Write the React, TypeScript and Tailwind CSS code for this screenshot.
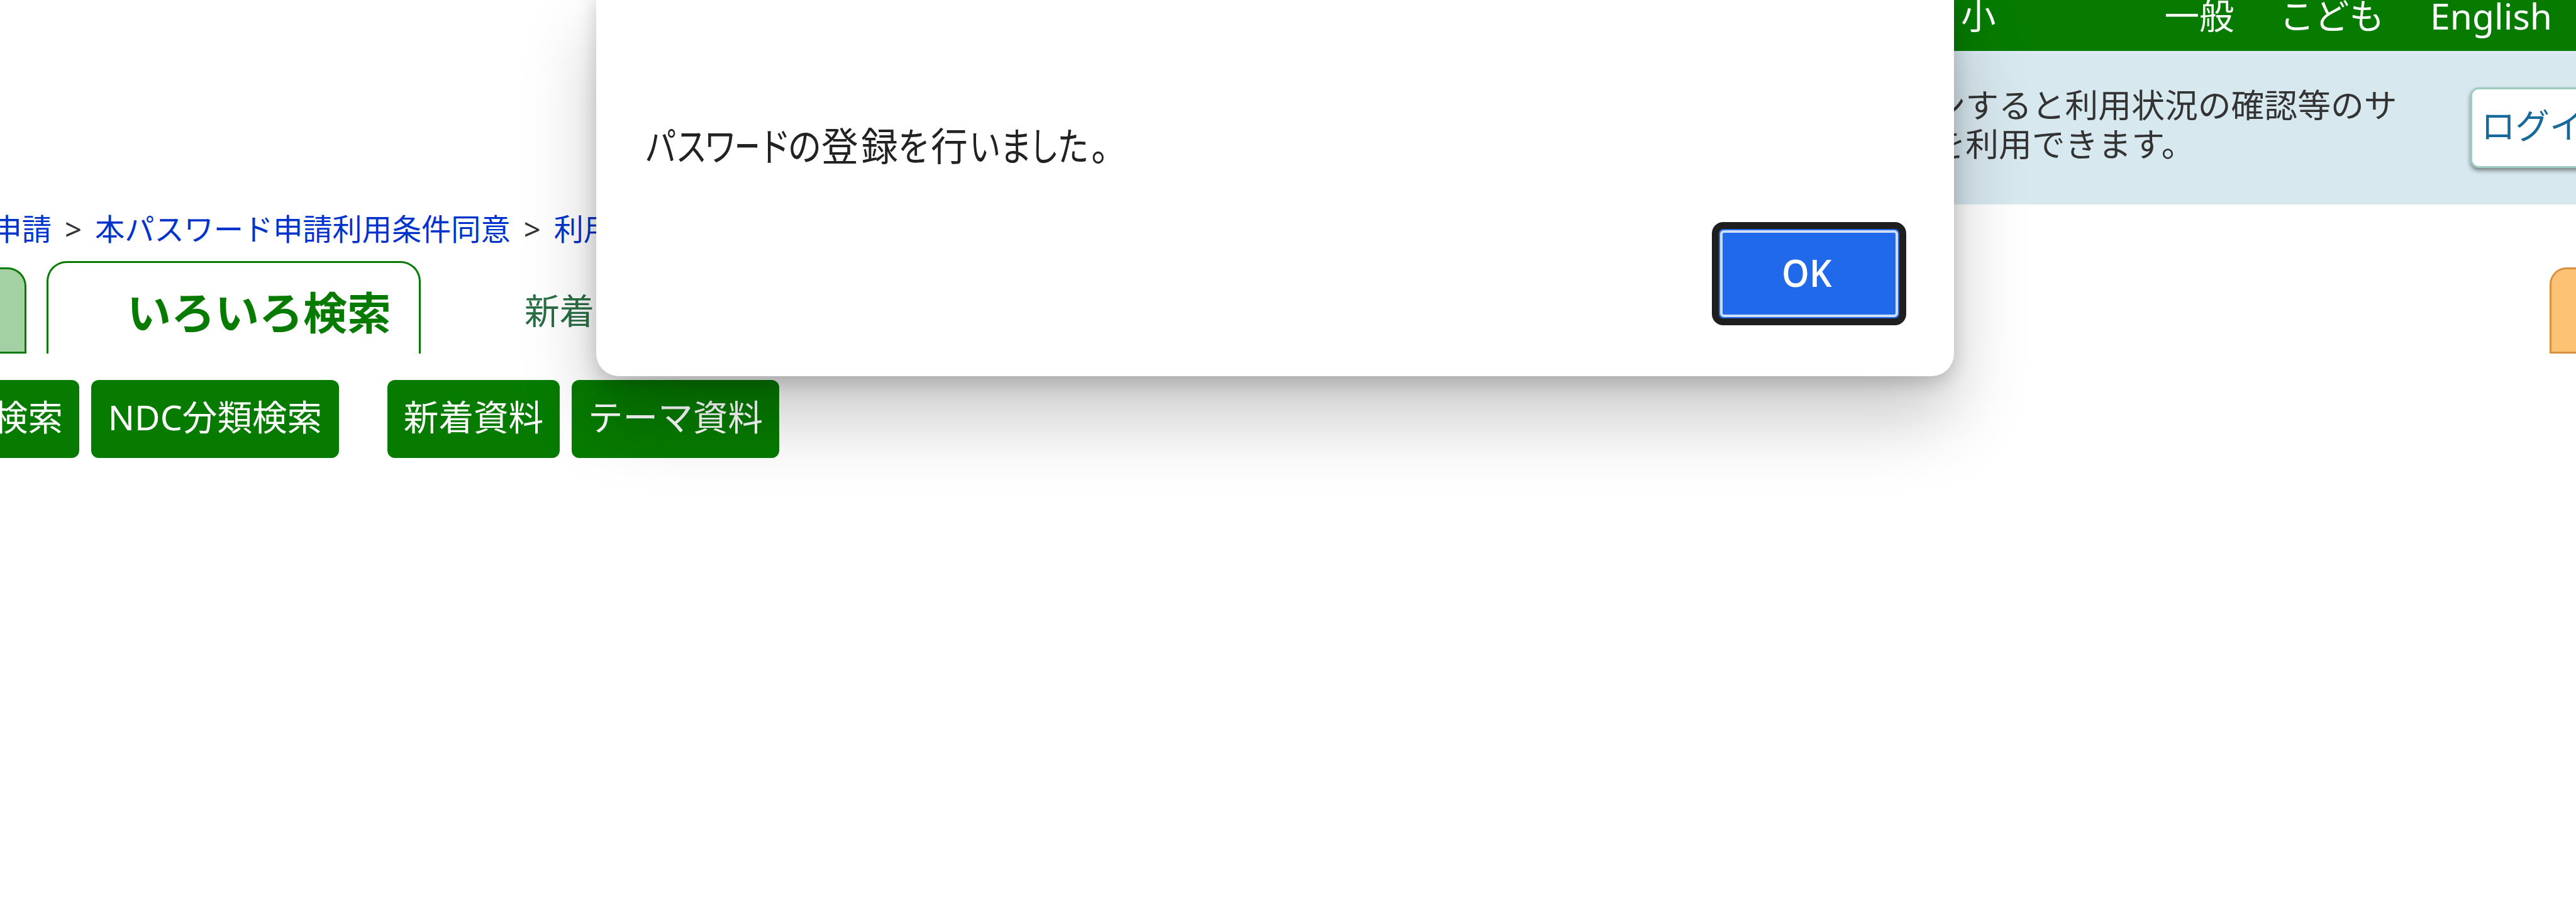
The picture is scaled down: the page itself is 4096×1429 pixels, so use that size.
import type { ReactNode } from 'react'

// [character, cell width, horizontal scale] - the dialog font has narrow kana
const message: [string, number, number][] = [
  ['パ', 51, 0.8],
  ['ス', 46, 0.8],
  ['ワ', 47, 0.84],
  ['ー', 39, 0.64],
  ['ド', 47, 0.84],
  ['の', 49, 0.86],
  ['登', 62, 0.94],
  ['録', 64, 0.94],
  ['を', 47, 0.82],
  ['行', 64, 0.94],
  ['い', 50, 0.8],
  ['ま', 48, 0.82],
  ['し', 43, 0.76],
  ['た', 49, 0.8],
  ['。', 65, 0.9],
]

const SearchButton = ({ className, children }: { className: string; children: ReactNode }) => (
  <button
    type="button"
    className={`flex h-[124px] items-center whitespace-nowrap bg-[#067b00] pb-[7px] text-[55.6px] leading-none text-white ${className}`}
  >
    {children}
  </button>
)

const Header = () => (
  <header className="ml-[2700px] h-[325px]">
    <div className="flex h-[81px] items-start bg-[#067b00] pl-[418px] text-[55.5px] leading-[50px] whitespace-nowrap text-white">
      <span>小</span>
      <a className="ml-[268px]">一般</a>
      <a className="ml-[72px]">こども</a>
      <a className="ml-[73px] text-[57px]">English</a>
    </div>
    <div className="flex h-[244px] items-start border-t-4 border-[#dce9f6] bg-[#d8e8ef]">
      <p className="mt-[51px] ml-[214px] w-[1011px] shrink-0 text-[52.8px] leading-[62px] whitespace-nowrap text-[#333]">
        ログインすると利用状況の確認等のサ
        <br />
        ービスを利用できます。
      </p>
      <div className="mt-[54px] ml-[3px] h-[128px] w-[300px] shrink-0 rounded-[13px] border-[3px] border-[#9dcdc1] bg-white pt-[30px] pl-[14px] text-[54.5px] leading-[54px] whitespace-nowrap text-[#17699b] shadow-[0_4px_7px_rgba(0,0,0,0.45)]">
        ログイン
      </div>
    </div>
  </header>
)

const Breadcrumb = () => (
  <nav className="flex h-[90px] items-center pb-[10px] text-[47.2px] leading-none whitespace-nowrap text-[#03c]">
    <a className="flex w-[82px] shrink-0 justify-end">申請</a>
    <span className="w-[69px] shrink-0 text-center text-[#333]">&gt;</span>
    <a>本パスワード申請利用条件同意</a>
    <span className="w-[69px] shrink-0 text-center text-[#333]">&gt;</span>
    <a>利用者</a>
  </nav>
)

const Tabs = () => (
  <div className="flex h-[147px] items-end">
    <div className="h-[137px] w-[42px] rounded-tr-[30px] border-[3px] border-l-0 border-[#067b00] bg-[#a3d1a3]" />
    <div className="ml-[32px] flex h-[147px] w-[595px] items-center justify-end rounded-t-[32px] border-[3px] border-b-0 border-[#067b00] bg-white pt-[14px] pr-[44px] text-[70px] leading-none font-bold text-[#067b00]">
      いろいろ検索
    </div>
    <div className="ml-[165px] flex h-[137px] items-center text-[55.6px] leading-none whitespace-nowrap text-[#2b6f45]">新着資料</div>
    <div className="ml-auto h-[137px] w-[42px] rounded-tl-[27px] border-[3px] border-r-0 border-[#d98f3c] bg-[#fdc274]" />
  </div>
)

const Dialog = () => (
  <div
    role="dialog"
    className="absolute top-[-12px] left-[948px] flex h-[610px] w-[2159px] flex-col rounded-b-[36px] bg-white px-[76px] pt-[212px] shadow-[0_66px_116px_rgba(0,0,0,0.22),0_10px_30px_rgba(0,0,0,0.18)]"
  >
    <p className="flex h-[64px] pl-px text-[62.5px] leading-[64px] text-[#222]">
      {message.map(([char, width, scale], i) => (
        <span key={i} className="flex shrink-0 justify-center" style={{ width }}>
          <span style={{ transform: `scaleX(${scale})` }}>{char}</span>
        </span>
      ))}
    </p>
    <button
      type="button"
      className="mt-[89px] flex h-[164px] w-[309px] items-center justify-center self-end rounded-[18px] border-[11px] border-[#1f1f1f] bg-[#2169eb] p-[2px]"
    >
      <span className="flex h-full w-full items-center justify-center rounded-[6px] border-4 border-[#d0dffa] pr-[8px] pb-[4px] font-['Open_Sans'] text-[60px] leading-none font-semibold text-white">
        <span className="scale-x-[0.93]">OK</span>
      </span>
    </button>
  </div>
)

export default function App() {
  return (
    <div className="relative h-[1429px] w-[4096px] overflow-hidden bg-white font-['Noto_Sans','Noto_Sans_CJK_JP',sans-serif]">
      <Header />
      <Breadcrumb />
      <Tabs />
      <div className="mt-[42px] flex">
        <SearchButton className="w-[126px] justify-end rounded-r-[12px] pr-[26px]">検索</SearchButton>
        <SearchButton className="ml-[19px] w-[394px] justify-center rounded-[12px]">NDC分類検索</SearchButton>
        <SearchButton className="ml-[77px] w-[274px] justify-center rounded-[12px]">新着資料</SearchButton>
        <SearchButton className="ml-[19px] w-[330px] justify-center rounded-[12px]">テーマ資料</SearchButton>
      </div>
      <Dialog />
    </div>
  )
}
